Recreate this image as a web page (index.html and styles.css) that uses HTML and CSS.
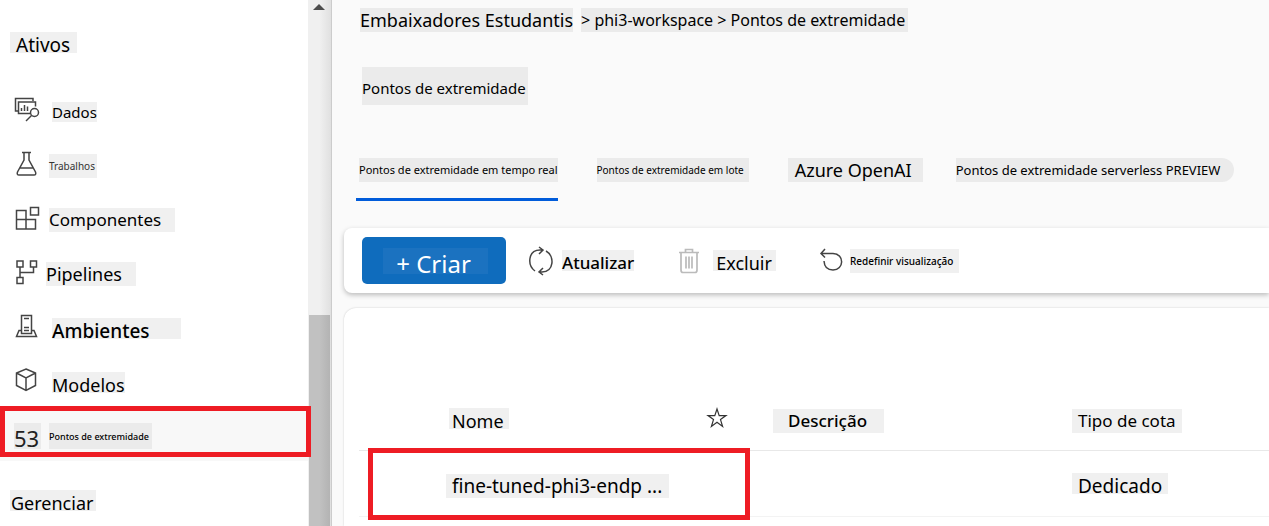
FILE: index.html
```html
<!DOCTYPE html>
<html lang="pt">
<head>
<meta charset="utf-8">
<title>Pontos de extremidade</title>
<link rel="stylesheet" href="styles.css">
</head>
<body>
<div class="app">
  <aside class="sidebar">
    <nav class="nav">
      <h2 class="nav-title"><span class="chip low fs-19 ativos">Ativos</span></h2>
      <ul class="nav-list">
        <li><a class="nav-item wide-gap" href="#">
          <svg class="icon" viewBox="0 0 26 26"><path d="M4 14H1.500V1.500H19V4M16 16.500H4.500V5H21.500V9.500M7.500 14V11M10.500 14V8M13.500 14V9.500"/><circle cx="20.500" cy="15.500" r="4"/><path d="M17.500 18.500L12 24"/></svg>
          <span class="chip fs-15">Dados</span></a></li>
        <li><a class="nav-item" href="#">
          <svg class="icon" viewBox="0 0 26 26"><path d="M8 1.500H17M10 1.500V9L3.500 21Q2.500 24 5 24H20Q22.500 24 21.500 21L15 9V1.500M6 17H19"/></svg>
          <span class="chip tall fs-10 trabalhos">Trabalhos</span></a></li>
        <li><a class="nav-item" href="#">
          <svg class="icon" viewBox="0 0 26 26"><path d="M2.500 5.500H12V24H2.500ZM2.500 14.500H21.500V24H2.500M16.500 2.500H24.500V10H16.500Z"/></svg>
          <span class="chip tall fs-17 pad-end">Componentes</span></a></li>
        <li><a class="nav-item tight-gap" href="#">
          <svg class="icon" viewBox="0 0 26 26"><path d="M3 2H9V8H3ZM16.500 2H22.500V8H16.500ZM3 18.500H9V24.500H3ZM6 8V18.500M6 13.500H19.500V8"/></svg>
          <span class="chip tall fs-18 pad-end">Pipelines</span></a></li>
        <li><a class="nav-item wide-gap" href="#">
          <svg class="icon" viewBox="0 0 26 26"><path d="M7.500 20.500V2.500H17.500V20.500ZM10 5.500H15M10 14.500H15M10 17.500H15M7.500 17.500H5L2.500 23.500H22.500L20 17.500H17.500"/></svg>
          <span class="chip low medium fs-19 ambientes">Ambientes</span></a></li>
        <li><a class="nav-item wide-gap" href="#">
          <svg class="icon" viewBox="0 0 26 26"><path d="M12 2L21.500 6V18.500L12 23.500L2.500 18.500V6ZM2.500 6L12 11L21.500 6M12 11V23.500"/></svg>
          <span class="chip low fs-18">Modelos</span></a></li>
        <li><a class="nav-item active" href="#" aria-current="page">
          <span class="chip dark low tallest fs-22 count">53</span>
          <span class="chip dark tall medium fs-9 current">Pontos de extremidade</span></a></li>
      </ul>
      <h2 class="nav-title second"><span class="chip low fs-18 gerenciar">Gerenciar</span></h2>
    </nav>
    <div class="scrollbar"><span class="scroll-up"></span><span class="scroll-thumb"></span></div>
  </aside>
  <main class="main">
    <header class="header">
      <nav class="crumbs">
        <a class="chip dark tall fs-18" href="#">Embaixadores Estudantis</a>
        <span class="chip dark tall fs-16 path">&gt; phi3-workspace &gt; Pontos de extremidade</span>
      </nav>
      <h1 class="title"><span class="chip dark fs-15 title-chip">Pontos de extremidade</span></h1>
      <div class="tabs" role="tablist">
        <button class="tab selected" role="tab" aria-selected="true"><span class="chip dark tall fs-11">Pontos de extremidade em tempo real</span></button>
        <button class="tab spaced" role="tab"><span class="chip dark tall fs-10 pad-tab">Pontos de extremidade em lote</span></button>
        <button class="tab spaced" role="tab"><span class="chip dark tall fs-18 pad-both">Azure OpenAI</span></button>
        <button class="tab" role="tab"><span class="chip dark tall rounded fs-13">Pontos de extremidade serverless PREVIEW</span></button>
      </div>
    </header>
    <section class="toolbar">
      <button class="create"><span class="create-label">+ Criar</span></button>
      <button class="tool refresh">
        <svg class="tool-icon" viewBox="0 0 26 30"><path d="M7 25C-1 19 0 4 12 4H15M11 1L15 4L11 8M18 5C27 10 26 26 14 26H11M15 22L11 26L15 29"/></svg>
        <span class="chip low medium fs-17">Atualizar</span></button>
      <button class="tool delete">
        <svg class="tool-icon muted" viewBox="0 0 26 30"><path d="M3 6.500H23M9.500 6V3.500H16.500V6M5 7V24Q5 26.500 7 26.500H19Q21 26.500 21 24V7M10 10.500V22.500M13 10.500V22.500M16 10.500V22.500"/></svg>
        <span class="chip low fs-18 excluir">Excluir</span></button>
      <button class="tool reset">
        <svg class="tool-icon" viewBox="0 0 26 30"><path d="M7 3L3 7.500L7 11.500M3 7.500H15C27 8 26 24 15 24Q6.500 24 6 15"/></svg>
        <span class="chip tall medium fs-10 redefinir">Redefinir visualização</span></button>
    </section>
    <section class="card">
      <table class="grid">
        <colgroup><col class="col-name"><col class="col-desc"><col></colgroup>
        <thead><tr>
          <th scope="col"><div class="name-head"><span class="chip low fs-18 nome">Nome</span>
            <svg class="star" viewBox="0 0 22 22"><path d="M11 2L13.200 8.600H20L14.500 12.600L16.600 19.500L11 15.300L5.400 19.500L7.500 12.600L2 8.600H8.800Z"/></svg></div></th>
          <th scope="col"><span class="chip tall medium fs-17 descricao">Descrição</span></th>
          <th scope="col"><span class="chip tall fs-17 cota">Tipo de cota</span></th>
        </tr></thead>
        <tbody><tr>
          <td class="name-cell"><a class="chip tall fs-19 endpoint" href="#">fine-tuned-phi3-endp ...</a></td>
          <td></td>
          <td><span class="chip low fs-19 cota">Dedicado</span></td>
        </tr></tbody>
      </table>
    </section>
  </main>
</div>
</body>
</html>
```

FILE: styles.css
```css
*, *::before, *::after { box-sizing: border-box; }
body { margin: 0; background: #fafafa; color: #000; font-family: "Noto Sans", "Open Sans", sans-serif; overflow: hidden; }
a { color: inherit; text-decoration: none; }
button { font: inherit; color: inherit; border: 0; background: none; padding: 0; cursor: pointer; }
h1, h2, ul { margin: 0; padding: 0; font-weight: 400; }
ul { list-style: none; }

.app { display: flex; height: 100vh; }

/* Text labels */
.chip { display: block; flex: none; background: #f0f0f0; line-height: 20px; white-space: nowrap; }
.dark { background: #ebebeb; }
.tall { line-height: 24px; }
.low { line-height: 16px; padding-top: 5px; }
.tallest { line-height: 22px; padding-top: 4px; }
.medium { font-weight: 500; }
.pad-end { padding-right: 14px; }
.pad-both { padding: 0 11px 0 7px; }
.pad-tab { padding-right: 5px; }
.rounded { border-radius: 0 12px 12px 0; padding-right: 14px; }
.fs-9 { font-size: 9px; }
.fs-10 { font-size: 10px; }
.fs-11 { font-size: 11px; }
.fs-13 { font-size: 13px; }
.fs-15 { font-size: 15px; }
.fs-16 { font-size: 16px; }
.fs-17 { font-size: 17px; }
.fs-18 { font-size: 18px; }
.fs-19 { font-size: 19px; }
.fs-22 { font-size: 22px; }

/* Sidebar */
.sidebar { display: flex; flex: none; width: 332px; background: #fff; }
.nav { flex: 1; padding-top: 32px; }
.nav-title { display: flex; padding-left: 10px; }
.nav-title.second { padding-top: 29px; }
.ativos { padding-left: 6px; padding-right: 7px; }
.gerenciar { padding-left: 1px; padding-right: 3px; }
.nav-list { padding-top: 30px; }
.nav-item { position: relative; display: flex; align-items: center; gap: 9px; height: 54px; padding: 4px 0 0 14px; }
.wide-gap { gap: 12px; }
.tight-gap { gap: 6px; }
.icon { flex: none; width: 26px; height: 26px; margin-bottom: 4px; fill: none; stroke: #444; stroke-width: 1.5; }
.ambientes { padding-right: 31px; }
.trabalhos { color: #333; padding-right: 2px; }
.active { background: #f8f8f8; gap: 8px; }
.active::after { content: ""; position: absolute; z-index: 2; left: 0; right: -3px; top: -1px; height: 51px; border: 5px solid #ee1c24; }
.count { width: 27px; color: #222; }
.current { padding-top: 2px; padding-right: 3px; }
.scrollbar { display: flex; flex-direction: column; width: 24px; background: linear-gradient(to right, #f0f0f0 50%, #e0e0e0); border-right: 1px solid #ccc; }
.scroll-up { width: 0; height: 0; margin: 4px 0 305px 5px; border: 6px solid transparent; border-top: 0; border-bottom-color: #4d4d4d; }
.scroll-thumb { flex: 1; margin: 0 1px; background: linear-gradient(to right, #c1c1c1 50%, #b3b3b3); }

/* Page header */
.main { flex: 1; min-width: 0; display: flex; flex-direction: column; padding-left: 12px; }
.header { padding: 8px 0 0 12px; }
.crumbs { display: flex; gap: 8px; padding-left: 4px; }
.path { padding-right: 3px; }
.title { display: flex; padding: 35px 0 0 6px; }
.title-chip { line-height: 26px; padding: 8px 2px 4px 0; }
.tabs { display: flex; gap: 33px; padding-top: 53px; }
.tab { height: 43px; padding-bottom: 18px; border-bottom: 3px solid transparent; }
.spaced { margin-left: 6px; }
.selected { padding-left: 3px; border-bottom-color: #015cda; }

/* Toolbar */
.toolbar { display: flex; align-items: center; flex: none; margin-top: 27px; height: 65px; padding-left: 18px; background: #fff; border-radius: 8px 0 0 8px; box-shadow: 0 2px 5px rgba(0, 0, 0, .25); }
.create { width: 144px; height: 47px; border-radius: 5px; background: #0f6cbd; color: #fff; font-size: 24px; }
.create-label { display: block; margin: 0 18px 0 21px; padding: 6px 4px 0 0; line-height: 20px; background: #1b72c0; }
.tool { display: flex; align-items: center; gap: 8px; }
.tool-icon { flex: none; width: 26px; height: 30px; fill: none; stroke: #444; stroke-width: 1.5; }
.muted { stroke: #bbb; stroke-width: 1.7; }
.refresh { margin-left: 22px; }
.delete { margin-left: 42px; gap: 11px; }
.reset { margin-left: 42px; gap: 6px; }
.excluir { padding-left: 3px; padding-right: 4px; }
.redefinir { padding-right: 6px; }

/* Endpoint table */
.card { flex: 1; margin-top: 15px; padding: 83px 0 0 15px; background: #fff; border-radius: 12px 0 0 0; box-shadow: 0 0 2px rgba(0, 0, 0, .2); }
.grid { width: 100%; table-layout: fixed; border-collapse: separate; border-spacing: 0; }
.col-name { width: 414px; }
.col-desc { width: 299px; }
.grid th, .grid td { padding: 0; text-align: left; font-weight: 400; vertical-align: middle; border-bottom: 1px solid #e8e8e8; }
.grid th { height: 60px; }
.grid td { height: 66px; border-bottom-color: #f3f3f3; }
.grid .chip { width: fit-content; }
.grid .medium { font-weight: 500; }
.name-head { display: flex; align-items: center; justify-content: space-between; padding: 0 45px 5px 90px; }
.nome { padding-left: 3px; padding-right: 5px; }
.star { width: 22px; height: 22px; fill: none; stroke: #333; stroke-width: 1.2; }
.descricao { padding-left: 15px; padding-right: 17px; }
.cota { padding-left: 6px; padding-right: 6px; }
.grid .name-cell { position: relative; padding: 4px 0 0 87px; }
.name-cell::after { content: ""; position: absolute; left: 9px; right: 23px; top: -3px; height: 72px; border: 5px solid #ee1c24; }
.endpoint { padding-left: 6px; padding-right: 7px; }
```
